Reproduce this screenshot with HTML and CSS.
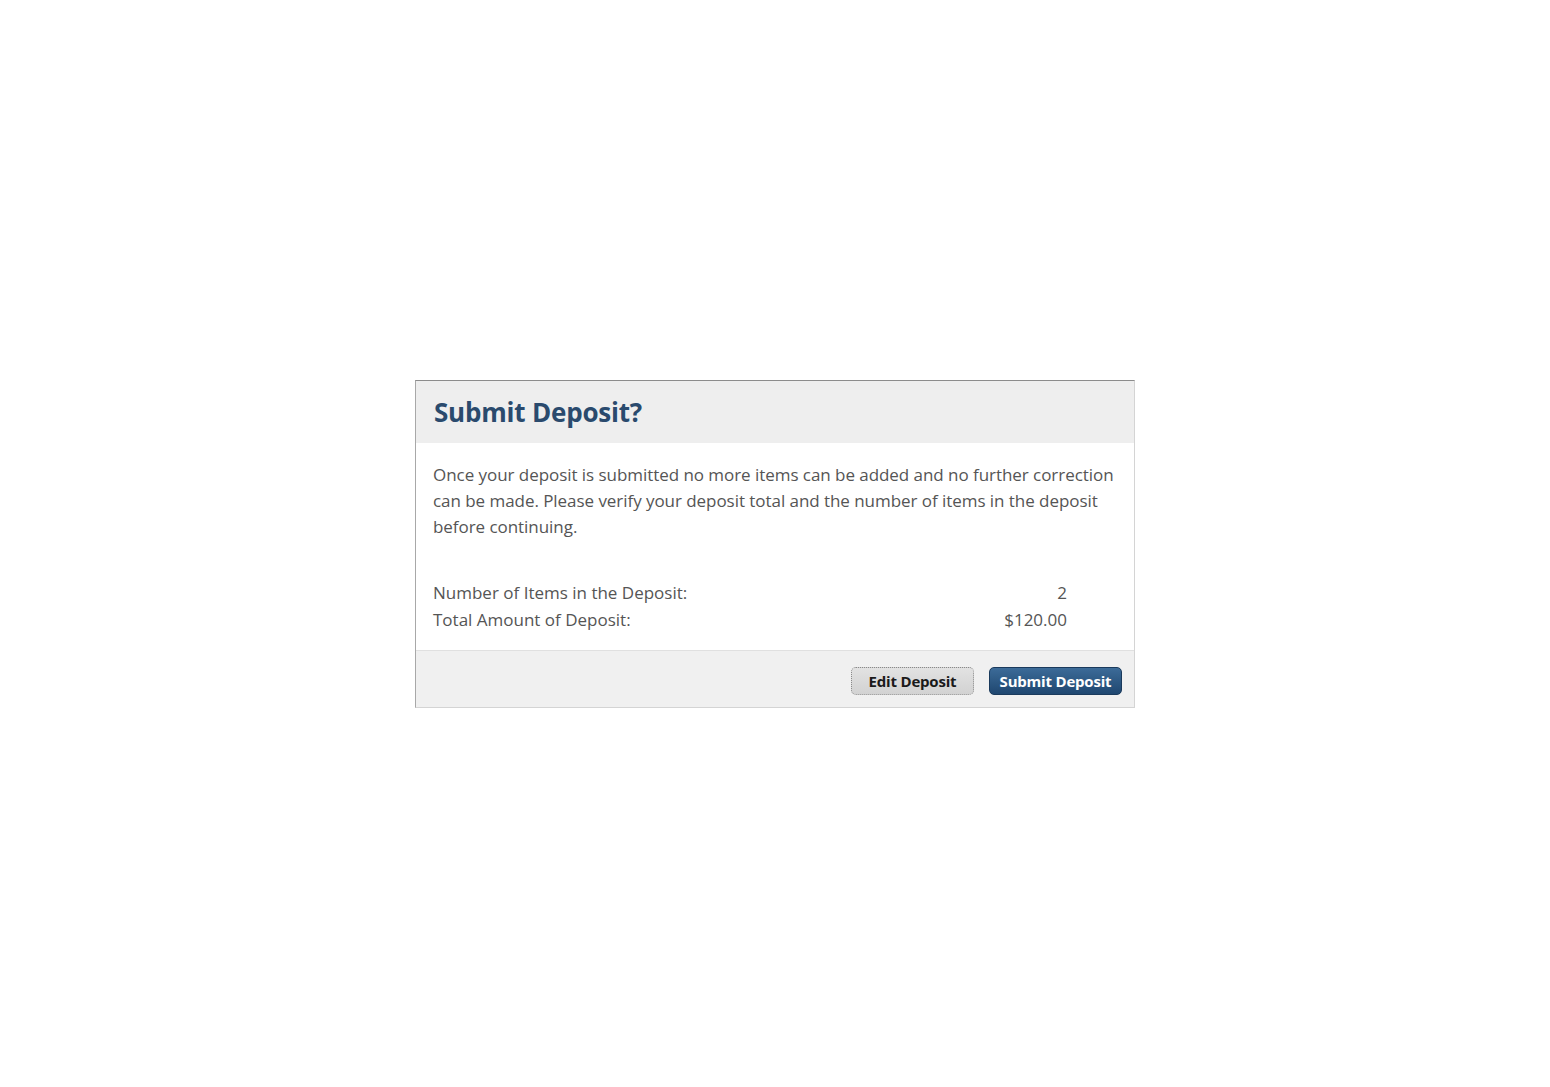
FILE: index.html
```html
<!DOCTYPE html>
<html>
<head>
<meta charset="utf-8">
<link rel="stylesheet" href="styles.css">
</head>
<body>
<div class="dialog">
  <div class="dialog-header">
    <h1 class="dialog-title">Submit Deposit?</h1>
  </div>
  <div class="dialog-body">
    <p class="message">Once your deposit is submitted no more items can be added and no further correction can be made. Please verify your deposit total and the number of items in the deposit before continuing.</p>
    <div class="summary">
      <div class="summary-label">Number of Items in the Deposit:</div>
      <div class="summary-value">2</div>
      <div class="summary-label">Total Amount of Deposit:</div>
      <div class="summary-value">$120.00</div>
    </div>
  </div>
  <div class="dialog-footer">
    <button class="btn btn-secondary">Edit Deposit</button>
    <button class="btn btn-primary">Submit Deposit</button>
  </div>
</div>
</body>
</html>
```

FILE: styles.css
```css
html, body {
  margin: 0;
  padding: 0;
  background: #ffffff;
}
body {
  height: 100vh;
  display: flex;
  align-items: center;
  justify-content: center;
  font-family: "Open Sans", "Noto Sans", sans-serif;
}
.dialog {
  width: 720px;
  box-sizing: border-box;
  border: 1px solid #d4d4d4;
  border-top-color: #8c8c8c;
  border-left-color: #a8a8a8;
  background: #ffffff;
  display: flex;
  flex-direction: column;
}
.dialog-header {
  height: 62px;
  background: #eeeeee;
  display: flex;
  align-items: center;
  padding-left: 18px;
}
.dialog-title {
  margin: 0;
  font-size: 26px;
  font-weight: 700;
  color: #2a4a6d;
  letter-spacing: -0.2px;
}
.dialog-body {
  padding: 19px 8px 17px 17px;
  color: #555555;
}
.message {
  margin: 0;
  font-size: 17px;
  line-height: 26px;
  letter-spacing: -0.05px;
}
.summary {
  margin-top: 39px;
  display: grid;
  grid-template-columns: 1fr auto;
  padding-right: 59px;
  font-size: 17px;
  line-height: 27px;
}
.summary-value {
  text-align: right;
}
.dialog-footer {
  height: 57px;
  box-sizing: border-box;
  padding-top: 4px;
  background: #f0f0f0;
  border-top: 1px solid #e0e0e0;
  display: flex;
  align-items: center;
  justify-content: flex-end;
  gap: 15px;
  padding-right: 12px;
}
.btn {
  height: 28px;
  border-radius: 5px;
  font-family: "Open Sans", "Noto Sans", sans-serif;
  font-size: 15px;
  font-weight: 700;
  padding: 0;
  white-space: nowrap;
  letter-spacing: -0.2px;
  cursor: pointer;
}
.btn-secondary {
  width: 123px;
  background: linear-gradient(#e2e2e2, #d2d2d2);
  color: #1a1a1a;
  border: 1px dotted #8a8a8a;
}
.btn-primary {
  width: 133px;
  background: linear-gradient(#3c6b98, #1f4770);
  color: #ffffff;
  border: 1px solid #1a3a5c;
}
```
